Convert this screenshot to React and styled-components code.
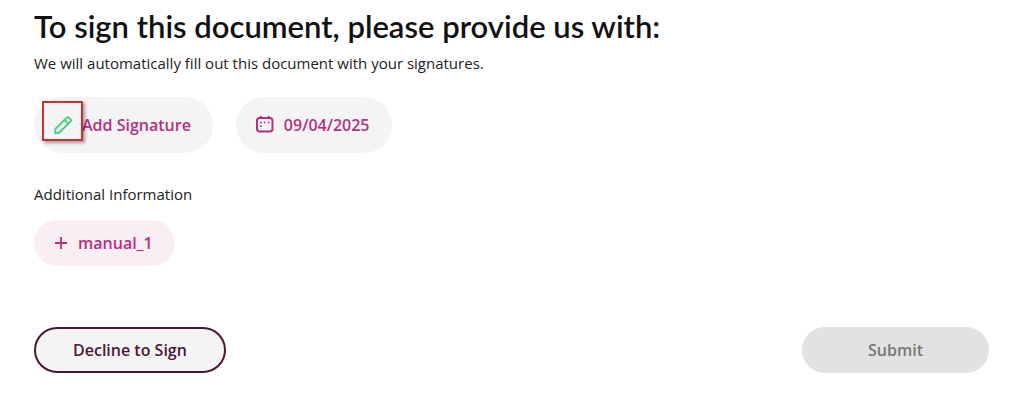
import styled, { createGlobalStyle } from "styled-components";

const magenta = "#b5307f";
const plum = "#4a1738";
const lightGrey = "#f4f4f4";

const GlobalStyle = createGlobalStyle`
  * {
    box-sizing: border-box;
  }
  body {
    margin: 0;
    background-color: #ffffff;
    color: #222222;
    font-family: "Open Sans", "Noto Sans", sans-serif;
    font-size: 15px;
    line-height: 24px;
  }
`;

const Page = styled.main`
  padding: 6px 35px 24px 34px;
`;

const Title = styled.h1`
  margin: 0;
  color: #111111;
  font-family: Lato, sans-serif;
  font-size: 31px;
  font-weight: 600;
  line-height: 40px;
`;

const Text = styled.p`
  margin: 5px 0 22px;
`;

const Row = styled.div`
  display: flex;
  flex-wrap: wrap;
  gap: 23px;
  margin-bottom: 29px;
`;

const SubTitle = styled.h2`
  margin: 0 0 14px;
  font-size: 15px;
  font-weight: 400;
`;

const Button = styled.button`
  display: flex;
  align-items: center;
  justify-content: center;
  height: 46px;
  border: 0;
  border-radius: 28px;
  font-family: inherit;
  font-size: 16px;
  font-weight: 600;
  cursor: pointer;
`;

const Chip = styled(Button)`
  gap: ${({ $small }) => ($small ? "10px" : "9px")};
  height: ${({ $small }) => ($small ? "46px" : "56px")};
  padding: 0 22px 0 20px;
  background-color: ${({ $small }) => ($small ? "#faeef5" : lightGrey)};
  color: ${magenta};
`;

const Highlight = styled.span`
  position: relative;
  display: flex;

  &::after {
    content: "";
    position: absolute;
    inset: -15px -10px -6px -12px;
    border: 2px solid #c93030;
    box-shadow: 2px 2px 3px rgba(0, 0, 0, 0.35);
  }
`;

const Footer = styled.footer`
  display: flex;
  justify-content: space-between;
  margin-top: 61px;
`;

const DeclineButton = styled(Button)`
  padding: 0 37px;
  border: 2px solid ${plum};
  background-color: ${lightGrey};
  color: ${plum};
`;

const SubmitButton = styled(Button)`
  padding: 0 66px;
  background-color: #e2e2e2;
  color: #777777;
  cursor: default;
`;

const PencilIcon = () => (
  <svg width="19" height="19" viewBox="0 1 19 19" fill="none" stroke="#4fd18b" strokeWidth="2" strokeLinejoin="round" aria-hidden="true">
    <path d="M1 18.200l.4-4.200L12.900 2.500c.5-.5 1.200-.5 1.700 0l2.100 2.100c.5.5.5 1.200 0 1.700L5.200 17.800z" />
    <path d="M10.600 4.900l3.700 3.700" />
  </svg>
);

const CalendarIcon = () => (
  <svg width="19" height="18" viewBox="0 0 19 18" fill="none" stroke={magenta} aria-hidden="true">
    <rect x="1" y="2" width="15.500" height="13.500" rx="2.800" strokeWidth="2" />
    <path d="M4.800 0v3M12.800 0v3" strokeWidth="2" />
    <path d="M4 6.500h1.700M7.900 6.500h1.700M11.800 6.500h1.700M4 10.200h1.700" strokeWidth="1.600" />
  </svg>
);

const PlusIcon = () => (
  <svg width="14" height="14" viewBox="0 0 14 14" fill="none" stroke={magenta} strokeWidth="1.800" aria-hidden="true">
    <path d="M7 1v12M1 7h12" />
  </svg>
);

const App = () => {
  return (
    <>
      <GlobalStyle />
      <Page>
        <Title>To sign this document, please provide us with:</Title>
        <Text>We will automatically fill out this document with your signatures.</Text>
        <Row>
          <Chip type="button">
            <Highlight>
              <PencilIcon />
            </Highlight>
            Add Signature
          </Chip>
          <Chip type="button">
            <CalendarIcon />
            09/04/2025
          </Chip>
        </Row>
        <SubTitle>Additional Information</SubTitle>
        <Chip type="button" $small>
          <PlusIcon />
          manual_1
        </Chip>
        <Footer>
          <DeclineButton type="button">Decline to Sign</DeclineButton>
          <SubmitButton type="button" disabled>
            Submit
          </SubmitButton>
        </Footer>
      </Page>
    </>
  );
};

export default App;
